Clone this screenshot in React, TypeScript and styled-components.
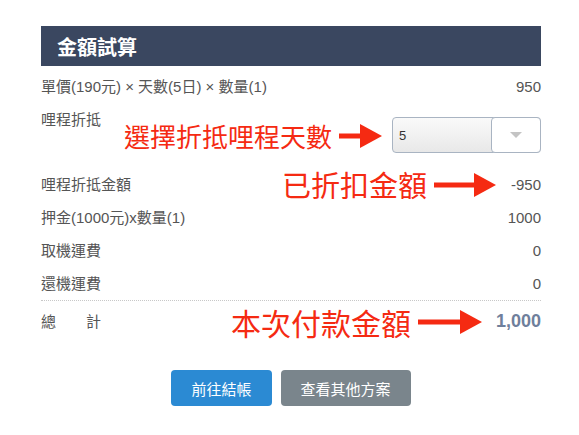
import React from 'react';
import styled, { createGlobalStyle } from 'styled-components';

const GlobalStyle = createGlobalStyle`
  body {
    margin: 0;
    background: #fff;
    font-family: "Liberation Sans", "Noto Sans CJK TC", sans-serif;
  }
`;

const Page = styled.div`
  padding: 26px 0 0 41px;
`;

const Panel = styled.div`
  width: 500px;
`;

const Header = styled.div`
  height: 40px;
  background: #3a4760;
  color: #fff;
  font-size: 20px;
  font-weight: bold;
  display: flex;
  align-items: center;
  padding-left: 16px;
  font-family: "Noto Sans CJK TC", sans-serif;
`;

const List = styled.div`
  margin-top: 4px;
`;

const Row = styled.div<{ $top?: boolean }>`
  display: flex;
  justify-content: space-between;
  align-items: ${(p) => (p.$top ? 'flex-start' : 'center')};
  padding: 8px 0;
  font-size: 15px;
  line-height: 17px;
  color: #555;
`;

const Label = styled.div``;

const Right = styled.div<{ $gap: number }>`
  display: flex;
  align-items: center;
  gap: ${(p) => p.$gap}px;
`;

const Value = styled.div``;

const TotalRow = styled(Row)`
  border-top: 1px dotted #c8c8c8;
  padding: 12px 0;
`;

const TotalLabel = styled.div`
  width: 60px;
  display: flex;
  justify-content: space-between;
`;

const TotalValue = styled.div`
  font-size: 18px;
  font-weight: bold;
  color: #6f7f9c;
`;

const Callout = styled.div<{ $size: number }>`
  display: flex;
  align-items: center;
  gap: 7px;
  height: 17px;
  color: #f52a12;
  font-size: ${(p) => p.$size}px;
  line-height: 1;
  font-family: "Noto Sans CJK TC", sans-serif;
  white-space: nowrap;
`;

const SelectBox = styled.div`
  margin: 6px 0 7px;
  width: 149px;
  height: 36px;
  box-sizing: border-box;
  border: 1px solid #a9b4c2;
  border-radius: 4px;
  background: linear-gradient(#fafafa, #e8e8e8);
  display: flex;
  align-items: stretch;
  color: #333;
`;

const SelectText = styled.div`
  flex: 1;
  display: flex;
  align-items: center;
  padding-left: 6px;
  font-size: 13px;
`;

const SelectButton = styled.div`
  width: 48px;
  margin: -1px -1px -1px 0;
  border: 1px solid #a9b4c2;
  border-radius: 4px;
  background: #fff;
  display: flex;
  align-items: center;
  justify-content: center;
`;

const Caret = styled.div`
  width: 0;
  height: 0;
  border-left: 6px solid transparent;
  border-right: 6px solid transparent;
  border-top: 6px solid #c4c4c4;
`;

const Buttons = styled.div`
  display: flex;
  justify-content: center;
  gap: 9px;
  margin-top: 28px;
`;

const Button = styled.button<{ $bg: string }>`
  height: 36px;
  padding: 0 20px;
  border: none;
  border-radius: 4px;
  background: ${(p) => p.$bg};
  color: #fff;
  font-size: 15px;
  font-family: "Noto Sans CJK TC", sans-serif;
`;

function Arrow({ width }: { width: number }) {
  const head = 22;
  return (
    <svg width={width} height="24" viewBox={`0 0 ${width} 24`}>
      <rect x="0" y="9.5" width={width - head + 1} height="5" fill="#f52a12" />
      <polygon points={`${width - head},0 ${width},12 ${width - head},24`} fill="#f52a12" />
    </svg>
  );
}

export default function App() {
  return (
    <Page>
      <GlobalStyle />
      <Panel>
        <Header>金額試算</Header>
        <List>
          <Row>
            <Label>單價(190元) × 天數(5日) × 數量(1)</Label>
            <Value>950</Value>
          </Row>
          <Row $top>
            <Label>哩程折抵</Label>
            <Right $gap={10}>
              <Callout $size={26}>
                選擇折抵哩程天數
                <Arrow width={43} />
              </Callout>
              <SelectBox>
                <SelectText>5</SelectText>
                <SelectButton>
                  <Caret />
                </SelectButton>
              </SelectBox>
            </Right>
          </Row>
          <Row>
            <Label>哩程折抵金額</Label>
            <Right $gap={15}>
              <Callout $size={29}>
                已折扣金額
                <Arrow width={62} />
              </Callout>
              <Value>-950</Value>
            </Right>
          </Row>
          <Row>
            <Label>押金(1000元)x數量(1)</Label>
            <Value>1000</Value>
          </Row>
          <Row>
            <Label>取機運費</Label>
            <Value>0</Value>
          </Row>
          <Row>
            <Label>還機運費</Label>
            <Value>0</Value>
          </Row>
          <TotalRow>
            <TotalLabel>
              <span>總</span>
              <span>計</span>
            </TotalLabel>
            <Right $gap={14}>
              <Callout $size={30}>
                本次付款金額
                <Arrow width={64} />
              </Callout>
              <TotalValue>1,000</TotalValue>
            </Right>
          </TotalRow>
        </List>
        <Buttons>
          <Button $bg="#2b8ad3">前往結帳</Button>
          <Button $bg="#7a858c">查看其他方案</Button>
        </Buttons>
      </Panel>
    </Page>
  );
}
